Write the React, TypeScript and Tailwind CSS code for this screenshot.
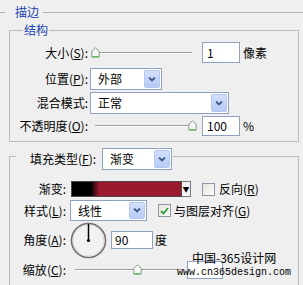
import React from 'react';

const font = { fontFamily: '"Noto Sans CJK SC", "Liberation Sans", sans-serif' };

const Thumb: React.FC = () => (
  <svg width="9" height="11" viewBox="0 0 9 11" className="block">
    <path d="M4.5 0.8 L8.2 4.2 L8.2 10.2 L0.8 10.2 L0.8 4.2 Z" fill="#f7f7f7" stroke="#7fa07f" strokeWidth="1" />
    <path d="M1.5 9.5 L7.5 9.5" stroke="#5cb85c" strokeWidth="1" />
  </svg>
);

const Slider: React.FC<{ pos: number; trackLeft: number; trackRight: number; width: number }> = ({ pos, trackLeft, trackRight, width }) => (
  <div className="relative h-full" style={{ width }}>
    <div
      className="absolute top-1/2 -mt-px h-[2px] border-t border-[#9a9a9a] border-b border-b-white"
      style={{ left: trackLeft, right: trackRight }}
    />
    <div className="absolute top-1/2 -mt-[6px]" style={{ left: pos }}>
      <Thumb />
    </div>
  </div>
);

const Arrow: React.FC = () => (
  <div className="w-[16px] h-full bg-[linear-gradient(#d3e0fb,#b7cbf6)] border border-[#b3c7ef] rounded-[2px] flex items-center justify-center">
    <svg width="8" height="5" viewBox="0 0 8 5">
      <path d="M1 0.5 L4 3.5 L7 0.5" fill="none" stroke="#3e5a8e" strokeWidth="1.8" />
    </svg>
  </div>
);

const Select: React.FC<{ value: string; width: number }> = ({ value, width }) => (
  <div className="h-full flex items-stretch bg-white border border-[#8ea2bf] p-px" style={{ width }}>
    <span className="flex-1 pl-[6px] text-[12px] leading-none flex items-center">{value}</span>
    <Arrow />
  </div>
);

const Check: React.FC<{ checked?: boolean }> = ({ checked }) => (
  <div className="w-[13px] h-[13px] border border-[#8c98a6] bg-[linear-gradient(135deg,#e6e6e0,#fbfbf9)] flex items-center justify-center">
    {checked && (
      <svg width="9" height="8" viewBox="0 0 9 8">
        <path d="M1 4 L3.5 6.5 L8 1" fill="none" stroke="#2e9b3a" strokeWidth="1.8" />
      </svg>
    )}
  </div>
);

const U: React.FC<{ c: string }> = ({ c }) => (
  <>(<span className="underline underline-offset-1">{c}</span>)</>
);

export default function App() {
  return (
    <div className="w-[303px] h-[285px] overflow-hidden bg-[#efefef] relative text-black" style={font}>
      <div className="flex items-center h-[16px] mt-[4px]">
        <div className="w-[5px] border-t border-[#b4b4b4]" />
        <span className="ml-[10px] text-[12px] leading-[16px] text-[#1a44b0]">描边</span>
        <div className="flex-1 ml-[4px] border-t border-[#b4b4b4]" />
      </div>

      {/* 结构 */}
      <div className="mt-[10px] ml-[9px] w-[290px] h-[112px] border border-[#bcbcbc] flex flex-col">
        <span className="-mt-[9px] ml-[13px] self-start px-px bg-[#efefef] text-[12px] leading-[16px] text-[#1a44b0]">结构</span>

        <div className="mt-[4px] h-[21px] flex items-center text-[12px]">
          <span className="w-[78px] text-right">大小<U c="S" />:</span>
          <div className="ml-[3px] h-full"><Slider pos={0} trackLeft={8} trackRight={5} width={106} /></div>
          <div className="ml-[5px] w-[38px] h-full bg-white border border-[#8ea2bf] pl-[4px] flex items-center">1</div>
          <span className="ml-[3px]">像素</span>
        </div>

        <div className="mt-[5px] h-[22px] flex items-center text-[12px]">
          <span className="w-[78px] text-right">位置<U c="P" />:</span>
          <div className="ml-[2px] h-full"><Select value="外部" width={72} /></div>
        </div>

        <div className="mt-[2px] h-[22px] flex items-center text-[12px]">
          <span className="w-[78px] text-right">混合模式:</span>
          <div className="ml-[2px] h-full"><Select value="正常" width={139} /></div>
        </div>

        <div className="mt-[2px] h-[20px] flex items-center text-[12px]">
          <span className="w-[78px] text-right">不透明度<U c="O" />:</span>
          <div className="ml-[3px] h-full"><Slider pos={97} trackLeft={4} trackRight={8} width={106} /></div>
          <div className="ml-[5px] w-[38px] h-full bg-white border border-[#8ea2bf] pl-[4px] flex items-center">100</div>
          <span className="ml-[3px]">%</span>
        </div>
      </div>

      {/* 填充类型 */}
      <div className="mt-[14px] ml-[9px] w-[290px] h-[140px] border border-[#bcbcbc] flex flex-col text-[12px]">
        <div className="-mt-[9px] ml-[6px] self-start h-[22px] flex items-center bg-[#efefef] pl-[14px] pr-px">
          <span>填充类型<U c="F" />:</span>
          <div className="ml-[6px] h-full"><Select value="渐变" width={70} /></div>
        </div>

        <div className="mt-[11px] h-[16px] flex items-center">
          <span className="w-[56px] text-right">渐变:</span>
          <div className="ml-[5px] h-full flex">
            <div className="w-[111px] h-full border border-[#4a4a4a] bg-[linear-gradient(to_right,#000_0px,#000_19px,#9b1a2e_27px,#9b1a2e_100%)]" />
            <div className="w-[9px] h-full border border-l-0 border-[#7a7a7a] bg-[#f4f4f4] flex items-center justify-center text-[7px] leading-none">▼</div>
          </div>
          <div className="ml-[11px]"><Check /></div>
          <span className="ml-[4px]">反向<U c="R" /></span>
        </div>

        <div className="mt-[3px] h-[21px] flex items-center">
          <span className="w-[56px] text-right">样式<U c="L" />:</span>
          <div className="ml-[4px] h-full"><Select value="线性" width={77} /></div>
          <div className="ml-[11px]"><Check checked /></div>
          <span className="ml-[3px]">与图层对齐<U c="G" /></span>
        </div>

        <div className="mt-[1px] h-[36px] flex items-center">
          <span className="w-[56px] text-right">角度<U c="A" />:</span>
          <svg width="37" height="37" viewBox="0 0 37 37" className="ml-[4px]">
            <circle cx="18.5" cy="18.5" r="17" fill="#f2f2f2" stroke="#6e6e6e" strokeWidth="1.6" />
            <circle cx="18.5" cy="18.5" r="15.6" fill="none" stroke="#d8d8d8" strokeWidth="1" />
            <line x1="18.5" y1="18.5" x2="18.5" y2="2" stroke="#000" strokeWidth="1.5" />
            <circle cx="18.5" cy="18.5" r="1.6" fill="#000" />
          </svg>
          <div className="ml-[4px] w-[42px] h-[18px] bg-white border border-[#8ea2bf] pl-[3px] flex items-center">90</div>
          <span className="ml-[2px]">度</span>
        </div>

        <div className="mt-[2px] h-[20px] flex items-center">
          <span className="w-[56px] text-right">缩放<U c="C" />:</span>
          <div className="ml-[5px] h-full"><Slider pos={62} trackLeft={4} trackRight={0} width={111} /></div>
          <div className="ml-[5px] w-[36px] h-[18px] bg-white border border-[#8ea2bf]" />
        </div>
      </div>

      <div className="absolute left-[192px] top-[251px] text-[12px] leading-[14px] text-black">中国-365设计网</div>
      <div
        className="absolute left-[177px] top-[267px] text-[10px] leading-[12px] text-black"
        style={{ fontFamily: '"Liberation Mono", monospace' }}
      >
        www.cn365design.com
      </div>
    </div>
  );
}
